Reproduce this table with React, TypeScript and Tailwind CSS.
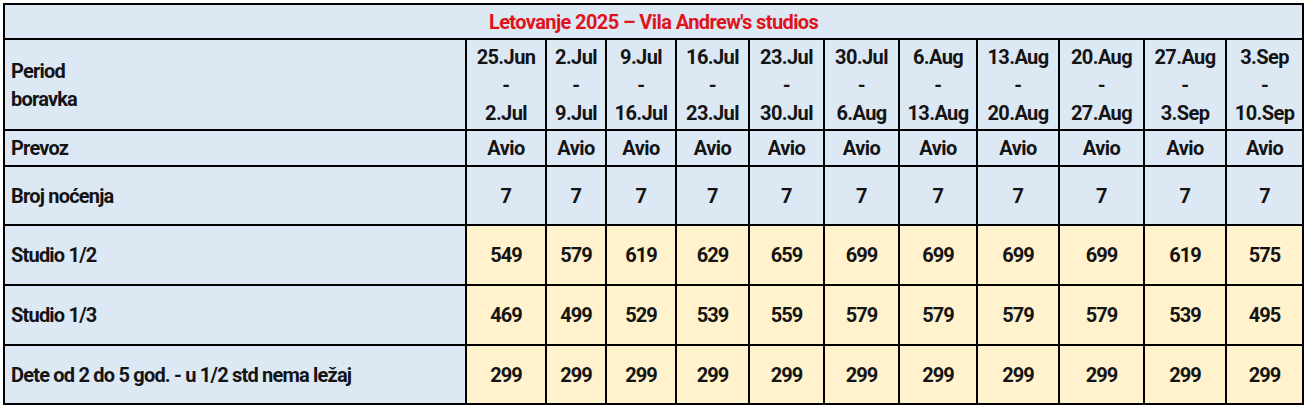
import React from "react";

const periods: [string, string][] = [
  ["25.Jun", "2.Jul"],
  ["2.Jul", "9.Jul"],
  ["9.Jul", "16.Jul"],
  ["16.Jul", "23.Jul"],
  ["23.Jul", "30.Jul"],
  ["30.Jul", "6.Aug"],
  ["6.Aug", "13.Aug"],
  ["13.Aug", "20.Aug"],
  ["20.Aug", "27.Aug"],
  ["27.Aug", "3.Sep"],
  ["3.Sep", "10.Sep"],
];

const widths = [462, 80, 60, 70, 73, 75, 75, 78, 82, 85, 82, 77];

const studio12 = [549, 579, 619, 629, 659, 699, 699, 699, 699, 619, 575];
const studio13 = [469, 499, 529, 539, 559, 579, 579, 579, 579, 539, 495];
const dete = Array(11).fill(299);

const cell = "border-2 border-black text-center align-middle p-0";
const num = cell + " bg-[#fff2cc] tracking-[-1px]";
const label = "border-2 border-black text-left align-middle pl-[6px] tracking-[-0.8px]";

export default function App() {
  return (
    <div
      className="w-[1307px] h-[406px] bg-white pt-[3px] pl-[3px] text-[#141414] font-bold text-[20px] tracking-[-0.6px]"
      style={{ fontFamily: 'Roboto, "Liberation Sans", sans-serif' }}
    >
      <table className="border-collapse table-fixed w-[1300px] bg-[#dde8f5]">
        <colgroup>
          {widths.map((w, i) => (
            <col key={i} style={{ width: w }} />
          ))}
        </colgroup>
        <tbody>
          <tr className="h-[35px]">
            <td colSpan={12} className="border-2 border-black text-center align-middle text-[#e0131b]">
              Letovanje 2025 – Vila Andrew's studios
            </td>
          </tr>
          <tr className="h-[91px]">
            <td className={label + " leading-[28px]"}>
              Period
              <br />
              boravka
            </td>
            {periods.map(([a, b], i) => (
              <td key={i} className={cell + " leading-[28px]"}>
                {a}
                <br />-<br />
                {b}
              </td>
            ))}
          </tr>
          <tr className="h-[36px]">
            <td className={label}>Prevoz</td>
            {periods.map((_, i) => (
              <td key={i} className={cell}>Avio</td>
            ))}
          </tr>
          <tr className="h-[59px]">
            <td className={label}>Broj noćenja</td>
            {periods.map((_, i) => (
              <td key={i} className={cell}>7</td>
            ))}
          </tr>
          <tr className="h-[60px]">
            <td className={label}>Studio 1/2</td>
            {studio12.map((v, i) => (
              <td key={i} className={num}>{v}</td>
            ))}
          </tr>
          <tr className="h-[60px]">
            <td className={label}>Studio 1/3</td>
            {studio13.map((v, i) => (
              <td key={i} className={num}>{v}</td>
            ))}
          </tr>
          <tr className="h-[59px]">
            <td className={label}>Dete od 2 do 5 god. - u 1/2 std nema ležaj</td>
            {dete.map((v, i) => (
              <td key={i} className={num}>{v}</td>
            ))}
          </tr>
        </tbody>
      </table>
    </div>
  );
}
